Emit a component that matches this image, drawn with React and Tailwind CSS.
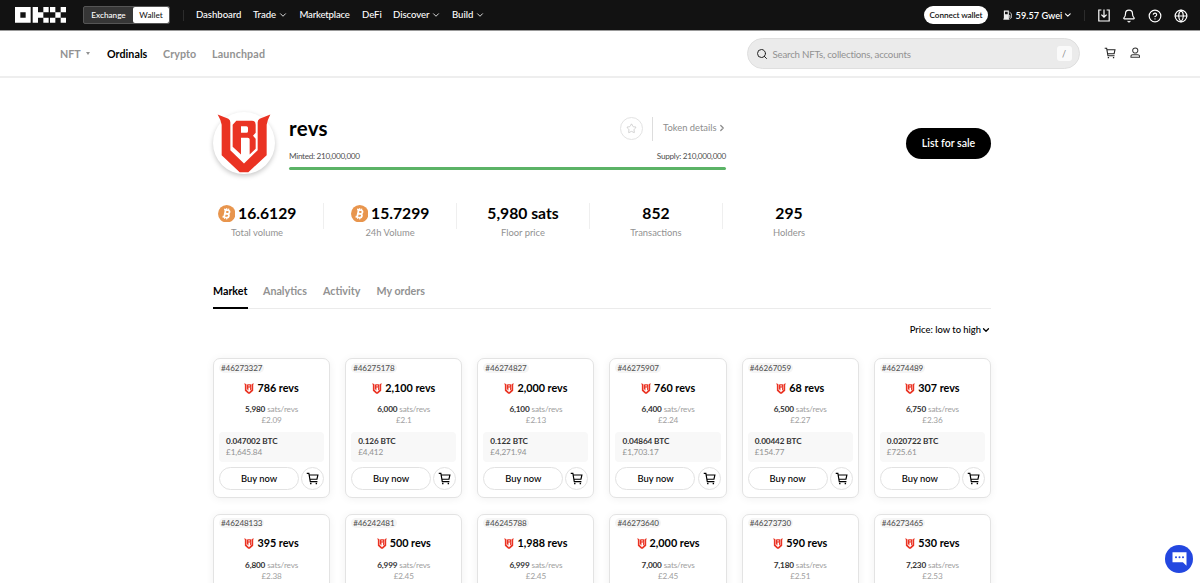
import React from "react";
import { Search, Bell, CircleHelp, Globe, Star, ChevronDown, ChevronRight } from "lucide-react";

const stats = [
  { label: "Total volume", value: "16.6129", btc: true },
  { label: "24h Volume", value: "15.7299", btc: true },
  { label: "Floor price", value: "5,980 sats" },
  { label: "Transactions", value: "852" },
  { label: "Holders", value: "295" },
];

const listings = [
  { id: "46273327", amount: "786", sats: "5,980", unit: "£2.09", btc: "0.047002", fiat: "£1,645.84" },
  { id: "46275178", amount: "2,100", sats: "6,000", unit: "£2.1", btc: "0.126", fiat: "£4,412" },
  { id: "46274827", amount: "2,000", sats: "6,100", unit: "£2.13", btc: "0.122", fiat: "£4,271.94" },
  { id: "46275907", amount: "760", sats: "6,400", unit: "£2.24", btc: "0.04864", fiat: "£1,703.17" },
  { id: "46267059", amount: "68", sats: "6,500", unit: "£2.27", btc: "0.00442", fiat: "£154.77" },
  { id: "46274489", amount: "307", sats: "6,750", unit: "£2.36", btc: "0.020722", fiat: "£725.61" },
  { id: "46248133", amount: "395", sats: "6,800", unit: "£2.38" },
  { id: "46242481", amount: "500", sats: "6,999", unit: "£2.45" },
  { id: "46245788", amount: "1,988", sats: "6,999", unit: "£2.45" },
  { id: "46273640", amount: "2,000", sats: "7,000", unit: "£2.45" },
  { id: "46273730", amount: "590", sats: "7,180", unit: "£2.51" },
  { id: "46273465", amount: "530", sats: "7,230", unit: "£2.53" },
];

// ── Icons ────────────────────────────────────────────────
function OkxLogo() {
  return (
    <svg viewBox="0 0 153 47" className="h-[15.7px] w-[51px]" fill="#fff">
      <path fillRule="evenodd" d="M0 0h47v47H0zM16 16v16h16V16z" />
      <path d="M53 0h16v16h16v16H69v15H53zM85 0h16v16H85zM85 32h16v15H85z" />
      <path d="M105 0h16v16h-16zM137 0h16v16h-16zM121 16h16v16h-16zM105 32h16v15h-16zM137 32h16v15h-16z" />
    </svg>
  );
}

function RevsMark({ className }) {
  return (
    <svg viewBox="50 42 162 176" className={className} fill="#ea3323">
      <path d="M52 43L84 56Q90 60 90 66V150L131 190L172 150V66Q172 60 178 56L210 43Q202 58 199 74V165L144 216H118L64 165V74Q61 58 52 43Z" />
      <path
        fillRule="evenodd"
        d="M97 74L108 62H155Q166 62 166 74V98L158 107L166 116V146L148 163V118Q148 113 142 113H122V163L97 140ZM122 78V98H138Q143 98 143 93V83Q143 78 138 78Z"
      />
    </svg>
  );
}

function BtcIcon() {
  return (
    <svg viewBox="0 0 18 18" className="size-[17.5px] shrink-0">
      <circle cx="9" cy="9" r="9" fill="#e8954d" />
      <g transform="rotate(12 9 9)" fill="none" stroke="#fff" strokeWidth="1.8">
        <path d="M7.1 5.2v7.6M5.4 5.2h4.2a1.8 1.8 0 0 1 0 3.7H7M9.7 8.9a1.95 1.95 0 0 1 0 3.9H5.4" />
        <path d="M7.9 3.4v1.8M10 3.4v1.8M7.9 12.8v1.8M10 12.8v1.8" strokeWidth="1.2" />
      </g>
    </svg>
  );
}

function CartIcon({ className }) {
  return (
    <svg viewBox="0 0 14 14" className={className} fill="none" stroke="currentColor" strokeWidth="1.25">
      <path d="M.8 1.5h2.3L4.6 10.3h7.7M3.4 3.2h9.4l-1 4.6H4.2" />
      <path d="M4.4 12.4h1.5M10.4 12.4h1.5" strokeWidth="1.7" />
    </svg>
  );
}

function UserIcon() {
  return (
    <svg viewBox="0 0 11 12" className="h-[11.5px] w-[10.5px]" fill="none" stroke="#333" strokeWidth="1.05">
      <circle cx="5.5" cy="3.6" r="2.7" />
      <path d="M1 10.8v-1.1q0-1.7 1.8-1.7h5.4q1.8 0 1.8 1.7v1.1z" />
    </svg>
  );
}

function GasIcon() {
  return (
    <svg viewBox="0 0 10 10" className="size-[10px]" fill="none" stroke="#eee">
      <path d="M.3 9.3h6.4" strokeWidth="1" />
      <path fillRule="evenodd" d="M.9.4h5.2v8.9H.9zM2.1 1.7v2.4h2.8V1.7z" fill="#eee" stroke="none" />
      <path d="M6.8 2.1l1.9 1.5v4.3q-.8 1.2-1.6 0V5.6H6" strokeWidth=".8" />
    </svg>
  );
}

function DownloadIcon() {
  return (
    <svg viewBox="0 0 12 13" className="h-[13px] w-[12px]" fill="none" stroke="#fff" strokeWidth="1.2">
      <path d="M3.4 1H.8v11h10.4V1H8.6M6 .4v7.6M3.4 5.6L6 8.2l2.6-2.6" />
    </svg>
  );
}

function ChatIcon() {
  return (
    <svg viewBox="0 0 15 14" className="h-[14px] w-[15px]">
      <path d="M.5.3h14v13.4l-3.6-3.4H.5z" fill="#fff" />
      <g fill="#2347e0">
        <circle cx="4" cy="5.3" r="1" />
        <circle cx="7.5" cy="5.3" r="1" />
        <circle cx="11" cy="5.3" r="1" />
      </g>
    </svg>
  );
}

// ── Top bar ──────────────────────────────────────────────
function TopBar() {
  return (
    <header className="flex h-[30px] items-center bg-[#121212] pl-[15px] pr-[12px] text-[9.6px] font-medium text-white">
      <OkxLogo />
      <div className="ml-[17px] flex h-[18px] w-[87px] shrink-0 rounded-[2px] border border-[#555] bg-[#363636] text-[8.2px]">
        <span className="flex w-[49px] items-center justify-center">Exchange</span>
        <span className="flex flex-1 items-center justify-center rounded-[2px] bg-white text-[#222]">Wallet</span>
      </div>
      <span className="ml-[13px] h-[11px] w-px bg-[#2c2c2c]" />
      <nav className="ml-[12px] flex items-center whitespace-nowrap pt-px tracking-[-0.05px]">
        <span className="w-[57px]">Dashboard</span>
        <span className="flex w-[46.5px] items-center gap-[2px]">Trade <ChevronDown size={10} strokeWidth={2} /></span>
        <span className="w-[62.5px] tracking-[-0.2px]">Marketplace</span>
        <span className="w-[31px]">DeFi</span>
        <span className="flex w-[59px] items-center gap-[1px]">Discover <ChevronDown size={10} strokeWidth={2} /></span>
        <span className="flex items-center gap-[2px]">Build <ChevronDown size={10} strokeWidth={2} /></span>
      </nav>
      <div className="ml-auto flex items-center">
        <button className="h-[18px] w-[64px] whitespace-nowrap rounded-full bg-white text-[8.2px] font-semibold tracking-[-0.1px] text-[#111]">Connect wallet</button>
        <span className="ml-[15px] flex w-[70px] items-center whitespace-nowrap pt-px font-semibold">
          <GasIcon />
          <span className="ml-[3px] mr-[1px] text-[9.2px]">59.57 Gwei</span>
          <ChevronDown size={10} strokeWidth={2.6} />
        </span>
        <span className="ml-[11px] h-[11px] w-px bg-[#2c2c2c]" />
        <div className="ml-[13px] flex items-center gap-[12px] pt-px">
          <DownloadIcon />
          <Bell size={14} strokeWidth={2} />
          <CircleHelp size={14} strokeWidth={2} />
          <Globe size={14} strokeWidth={2} />
        </div>
      </div>
    </header>
  );
}

function SubNav() {
  return (
    <div className="flex h-[48px] items-center border-b-2 border-t border-[#eeeeee] border-t-[#999] pl-[60px] pr-[60px]">
      <nav className="flex items-center pt-px text-[10.7px] font-bold text-[#929292]">
        <span className="flex w-[47px] items-center gap-[5px]">
          NFT
          <span className="border-x-[2.5px] border-t-[3.5px] border-x-transparent border-t-[#929292]" />
        </span>
        <span className="w-[56px] tracking-[0.05px] text-black">Ordinals</span>
        <span className="w-[49px] tracking-[0.1px]">Crypto</span>
        <span className="tracking-[0.15px]">Launchpad</span>
      </nav>
      <div className="ml-auto flex h-[31px] w-[333px] items-center rounded-full border border-[#dfdfdf] bg-[#ebebeb] pl-[8px] pr-[7px]">
        <Search size={12} strokeWidth={2} color="#222" />
        <span className="ml-[5px] pt-px text-[9.7px] tracking-[-0.2px] text-[#929292]">Search NFTs, collections, accounts</span>
        <span className="ml-auto flex h-[15px] w-[15px] items-center justify-center rounded-[3px] bg-[#fafafa] text-[9px] text-[#888]">/</span>
      </div>
      <div className="ml-[24px] flex items-center gap-[14px] pb-[2px]">
        <CartIcon className="size-[12px] text-[#222]" />
        <UserIcon />
      </div>
    </div>
  );
}

// ── Collection header ────────────────────────────────────
function Collection() {
  return (
    <section className="flex h-[90px] pt-[34px]">
      <div className="flex size-[62px] shrink-0 items-center justify-center rounded-full bg-white shadow-[0_2px_5px_rgba(0,0,0,0.22)]">
        <RevsMark className="h-[59px] w-[54px] shrink-0" />
      </div>
      <div className="ml-[14px] w-[437px]">
        <div className="flex h-[33px] items-center">
          <h1 className="text-[20.5px] font-bold leading-none tracking-[0.3px] text-black">revs</h1>
          <span className="ml-auto flex size-[23px] items-center justify-center rounded-full border border-[#e3e3e3]">
            <Star size={11} strokeWidth={1.6} color="#c4c4c4" />
          </span>
          <span className="ml-[9px] h-[24px] w-px bg-[#dddddd]" />
          <span className="ml-[10px] flex w-[63px] items-center whitespace-nowrap text-[9.4px] text-[#8d8d8d]">
            Token details
            <ChevronRight size={10} strokeWidth={3} className="shrink-0" />
          </span>
        </div>
        <div className="mt-[4px] flex h-[14px] items-center justify-between text-[8.2px] tracking-[-0.3px] text-[#505050]">
          <span>Minted: 210,000,000</span>
          <span>Supply: 210,000,000</span>
        </div>
        <div className="mt-[4px] h-[3px] rounded-full bg-[#5bb366]" />
      </div>
      <button className="ml-auto mt-[16px] h-[31px] w-[85px] rounded-full bg-black pt-px text-[10.6px] font-semibold text-white">
        List for sale
      </button>
    </section>
  );
}

function Stats() {
  return (
    <section className="mt-[35px] flex h-[36px]">
      {stats.map((s, i) => (
        <React.Fragment key={s.label}>
          {i > 0 && <span className="mx-[22px] h-[26px] w-px bg-[#efefef]" />}
          <div className="flex w-[88px] flex-col items-center whitespace-nowrap">
            <div className="flex h-[21px] items-center gap-[3px] text-[15.7px] font-bold text-black">
              {s.btc && <BtcIcon />}
              {s.value}
            </div>
            <span className="mt-[1px] text-[9.4px] leading-[15px] text-[#929292]">{s.label}</span>
          </div>
        </React.Fragment>
      ))}
    </section>
  );
}

function Tabs() {
  return (
    <div className="mt-[40px] flex h-[30px] gap-[15px] border-b border-[#ebebeb] text-[10.7px] font-bold leading-[24px] text-[#929292]">
      <span className="-mb-px h-[30px] w-[35px] border-b-2 border-black text-black">Market</span>
      <span className="w-[45px]">Analytics</span>
      <span className="w-[38.5px]">Activity</span>
      <span>My orders</span>
    </div>
  );
}

function ListingCard({ item }) {
  return (
    <div className="h-[140px] rounded-[7px] border border-[#e3e3e3] bg-white px-[5px] shadow-[0_1px_8px_rgba(0,0,0,0.06)]">
      <div className="flex h-[17px] items-center">
        <span className="rounded-full bg-[#f5f5f5] px-[2px] text-[8.1px] font-medium leading-[10px] tracking-[-0.1px] text-[#555]">#{item.id}</span>
      </div>
      <div className="mt-px flex h-[22px] items-center justify-center gap-[3px] text-[10.8px] font-bold text-black">
        <RevsMark className="h-[11px] w-[10px]" />
        {item.amount} revs
      </div>
      <div className="mt-[5px] text-center text-[8.2px] leading-[11px] tracking-[-0.15px] text-[#a0a0a0]">
        <div>
          <span className="font-bold text-[#333]">{item.sats}</span> sats/revs
        </div>
        <div>{item.unit}</div>
      </div>
      {item.btc && (
        <>
          <div className="mt-[6px] h-[30px] rounded-[4px] bg-[#f8f8f8] px-[7px] pt-[4px] text-[8.2px] leading-[10.5px] tracking-[-0.1px] text-[#929292]">
            <div className="font-bold text-[#333]">{item.btc} BTC</div>
            <div>{item.fiat}</div>
          </div>
          <div className="mt-[5px] flex items-center justify-between">
            <button className="h-[23px] w-[80px] rounded-full border border-[#e2e2e2] pt-px text-[9.4px] font-medium text-black">Buy now</button>
            <button className="flex size-[23px] items-center justify-center rounded-full border border-[#e2e2e2]">
              <CartIcon className="size-[13px] text-black" />
            </button>
          </div>
        </>
      )}
    </div>
  );
}

export default function App() {
  return (
    <div className="relative h-[583px] overflow-hidden bg-white font-[Lato,'Noto_Sans',sans-serif]">
      <TopBar />
      <SubNav />
      <main className="ml-[213px] w-[778px]">
        <Collection />
        <Stats />
        <Tabs />
        <div className="mt-[13px] flex h-[16px] items-center justify-end text-[9.4px] font-medium text-black">
          Price: low to high
          <ChevronDown size={10} strokeWidth={3} />
        </div>
        <div className="mt-[20px] grid grid-cols-6 gap-x-[15px] gap-y-[15.5px]">
          {listings.map((item) => (
            <ListingCard key={item.id} item={item} />
          ))}
        </div>
      </main>
      <button className="absolute bottom-[10px] right-[7px] flex size-[28px] items-center justify-center rounded-full bg-[#2347e0]">
        <ChatIcon />
      </button>
    </div>
  );
}
